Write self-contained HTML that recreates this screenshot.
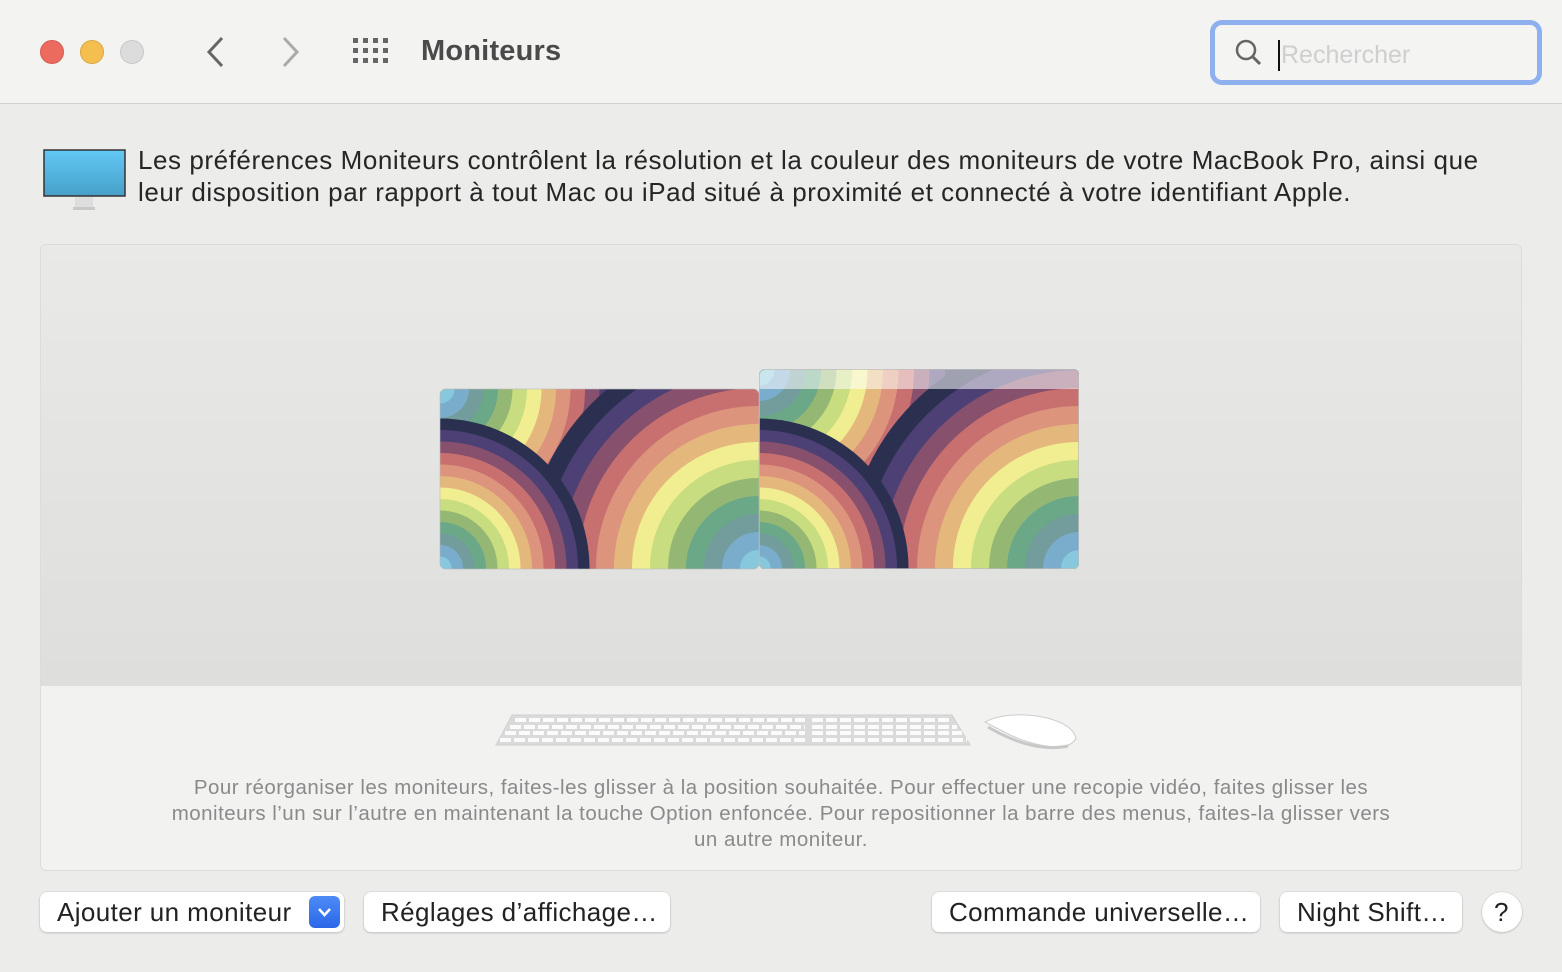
<!DOCTYPE html>
<html><head><meta charset="utf-8"><style>
*{margin:0;padding:0;box-sizing:border-box}
body{width:1562px;height:972px;background:#ececeb;font-family:"Liberation Sans",sans-serif;position:relative;overflow:hidden}
.hdr{position:absolute;left:0;top:0;width:1562px;height:104px;background:#f3f3f2;border-bottom:1px solid #d2d2d2}
.dot{position:absolute;top:40px;width:24px;height:24px;border-radius:50%}
.title{position:absolute;left:421px;top:35px;font-size:29px;font-weight:bold;color:#4a4a4a;letter-spacing:.2px}
.search{position:absolute;left:1210px;top:20px;width:332px;height:65px;border:5px solid #8fb0ee;border-radius:12px;background:#f4f4f3}
.search .ph{position:absolute;left:66px;top:16px;font-size:25px;color:#cfcfcf}
.search .cur{position:absolute;left:63px;top:15px;width:2px;height:31px;background:#111}
.desc{position:absolute;left:138px;top:144px;font-size:26px;letter-spacing:.56px;line-height:32px;color:#262626;white-space:nowrap}
.panel{position:absolute;left:40px;top:244px;width:1482px;height:627px;border:1px solid #dcdcdc;border-radius:6px;overflow:hidden;background:#f2f2f1}
.upper{position:absolute;left:0;top:0;width:100%;height:441px;background:linear-gradient(#e9e9e7,#dededc)}
.help{position:absolute;left:0;top:530px;width:100%;text-align:center;font-size:20.5px;letter-spacing:.48px;line-height:26px;color:#8a8a8a;white-space:nowrap}
.btn{position:absolute;top:892px;height:40px;background:#fff;border-radius:7px;box-shadow:0 0 0 .5px #ccc,0 1px 2px rgba(0,0,0,.2);font-size:26px;letter-spacing:.4px;color:#222;line-height:40px;padding-left:17px;white-space:nowrap}
</style></head><body>
<div class="hdr">
<div class="dot" style="left:40px;background:#ed6a5e;border:1px solid #d45a4f"></div>
<div class="dot" style="left:80px;background:#f5bf4f;border:1px solid #d9a63c"></div>
<div class="dot" style="left:120px;background:#dcdcdc;border:1px solid #c8c8c8"></div>
<svg style="position:absolute;left:200px;top:34px" width="110" height="36"><path d="M22 4 L9 18 L22 32" fill="none" stroke="#666" stroke-width="3"/><path d="M84 4 L97 18 L84 32" fill="none" stroke="#aaa" stroke-width="3"/></svg>
<svg style="position:absolute;left:353px;top:38px" width="38" height="28"><g fill="#666"><rect x="0" y="0" width="5" height="5"/><rect x="10" y="0" width="5" height="5"/><rect x="20" y="0" width="5" height="5"/><rect x="30" y="0" width="5" height="5"/><rect x="0" y="10" width="5" height="5"/><rect x="10" y="10" width="5" height="5"/><rect x="20" y="10" width="5" height="5"/><rect x="30" y="10" width="5" height="5"/><rect x="0" y="20" width="5" height="5"/><rect x="10" y="20" width="5" height="5"/><rect x="20" y="20" width="5" height="5"/><rect x="30" y="20" width="5" height="5"/></g></svg>
<div class="title">Moniteurs</div>
<div class="search"><svg style="position:absolute;left:20px;top:14px" width="30" height="30"><circle cx="11" cy="11" r="9" fill="none" stroke="#666" stroke-width="2.5"/><path d="M17.5 17.5 L25 25" stroke="#666" stroke-width="3"/></svg><div class="cur"></div><div class="ph">Rechercher</div></div>
</div>
<svg style="position:absolute;left:43px;top:149px" width="84" height="64"><defs><linearGradient id="mg" x1="0" y1="0" x2="0" y2="1"><stop offset="0" stop-color="#62c8f5"/><stop offset="1" stop-color="#46a0c8"/></linearGradient></defs><rect x="1" y="1" width="81" height="46" fill="url(#mg)" stroke="#333" stroke-width="1.5"/><rect x="32" y="48" width="18" height="12" fill="#ddd"/><rect x="30" y="58" width="22" height="3" fill="#c8c8c8"/></svg>
<div class="desc">Les préférences Moniteurs contrôlent la résolution et la couleur des moniteurs de votre MacBook Pro, ainsi que<br>leur disposition par rapport à tout Mac ou iPad situé à proximité et connecté à votre identifiant Apple.</div>
<div class="panel"><div class="upper"></div>
<div class="help">Pour réorganiser les moniteurs, faites-les glisser à la position souhaitée. Pour effectuer une recopie vidéo, faites glisser les<br>moniteurs l’un sur l’autre en maintenant la touche Option enfoncée. Pour repositionner la barre des menus, faites-la glisser vers<br>un autre moniteur.</div></div>
<svg style="position:absolute;left:0;top:0" width="1562" height="972">
<defs>
<g id="r">
<circle r="13" fill="#2c3050"/><circle r="12" fill="#4c4074"/><circle r="11" fill="#87506c"/><circle r="10" fill="#c87070"/><circle r="9" fill="#dc947c"/><circle r="8" fill="#e4b87c"/><circle r="7" fill="#f0ee90"/><circle r="6" fill="#c8dc80"/><circle r="5" fill="#94b874"/><circle r="4" fill="#6aa888"/><circle r="3" fill="#739c9c"/><circle r="2" fill="#7aaccc"/><circle r="1" fill="#88c8dc"/>
</g>
<clipPath id="c1"><rect x="440" y="389" width="319" height="180" rx="6"/></clipPath>
<clipPath id="c2"><rect x="759" y="369" width="320" height="200" rx="6"/></clipPath>
</defs>
<g clip-path="url(#c1)">
<rect x="440" y="389" width="319" height="180" fill="#2c3050"/>
<use href="#r" transform="translate(440,389) scale(14.5)"/>
<use href="#r" transform="translate(758,568) scale(18)"/>
<use href="#r" transform="translate(440,568) scale(11.5)"/>
</g>
<g clip-path="url(#c2)">
<rect x="759" y="369" width="320" height="200" fill="#2c3050"/>
<use href="#r" transform="translate(759,370) scale(15.5)"/>
<use href="#r" transform="translate(1079,568) scale(18)"/>
<use href="#r" transform="translate(759,568) scale(11.5)"/>
<rect x="759" y="369" width="320" height="20" fill="#fff" opacity=".55"/>
</g>
<rect x="440" y="389" width="319" height="180" rx="6" fill="none" stroke="#bbb" stroke-opacity=".6"/>
<rect x="759.5" y="369.5" width="319" height="199" rx="6" fill="none" stroke="#bbb" stroke-opacity=".7"/>
<path d="M512 715 H952 L970 745 H496 Z" fill="#dadada" stroke="#d0d0d0"/>
<g stroke="#fbfbfb" stroke-width="4" stroke-dasharray="11 3">
<line x1="515" y1="720" x2="805" y2="720"/><line x1="812" y1="720" x2="952" y2="720"/>
<line x1="510" y1="727" x2="805" y2="727"/><line x1="812" y1="727" x2="957" y2="727"/>
<line x1="505" y1="733" x2="805" y2="733"/><line x1="812" y1="733" x2="962" y2="733"/>
<line x1="500" y1="740" x2="805" y2="740"/><line x1="812" y1="740" x2="967" y2="740"/>
</g>
<path d="M985 722 C1010 708 1070 715 1076 738 C1070 752 1040 748 1010 735 Z" fill="#fff" stroke="#ccc"/>
<path d="M988 727 C1010 740 1040 752 1068 746" fill="none" stroke="#c8c8c8" stroke-width="3"/>
</svg>
<div class="btn" style="left:40px;width:304px">Ajouter un moniteur<div style="position:absolute;left:269px;top:4px;width:31px;height:32px;border-radius:6px;background:linear-gradient(#4d8bf6,#2a68e8)"><svg width="31" height="32"><path d="M10 13 L15.5 19 L21 13" fill="none" stroke="#fff" stroke-width="2.5"/></svg></div></div>
<div class="btn" style="left:364px;width:306px">Réglages d’affichage…</div>
<div class="btn" style="left:932px;width:328px">Commande universelle…</div>
<div class="btn" style="left:1280px;width:182px">Night Shift…</div>
<div class="btn" style="left:1482px;width:40px;border-radius:50%;padding-left:12px">?</div>
</body></html>
